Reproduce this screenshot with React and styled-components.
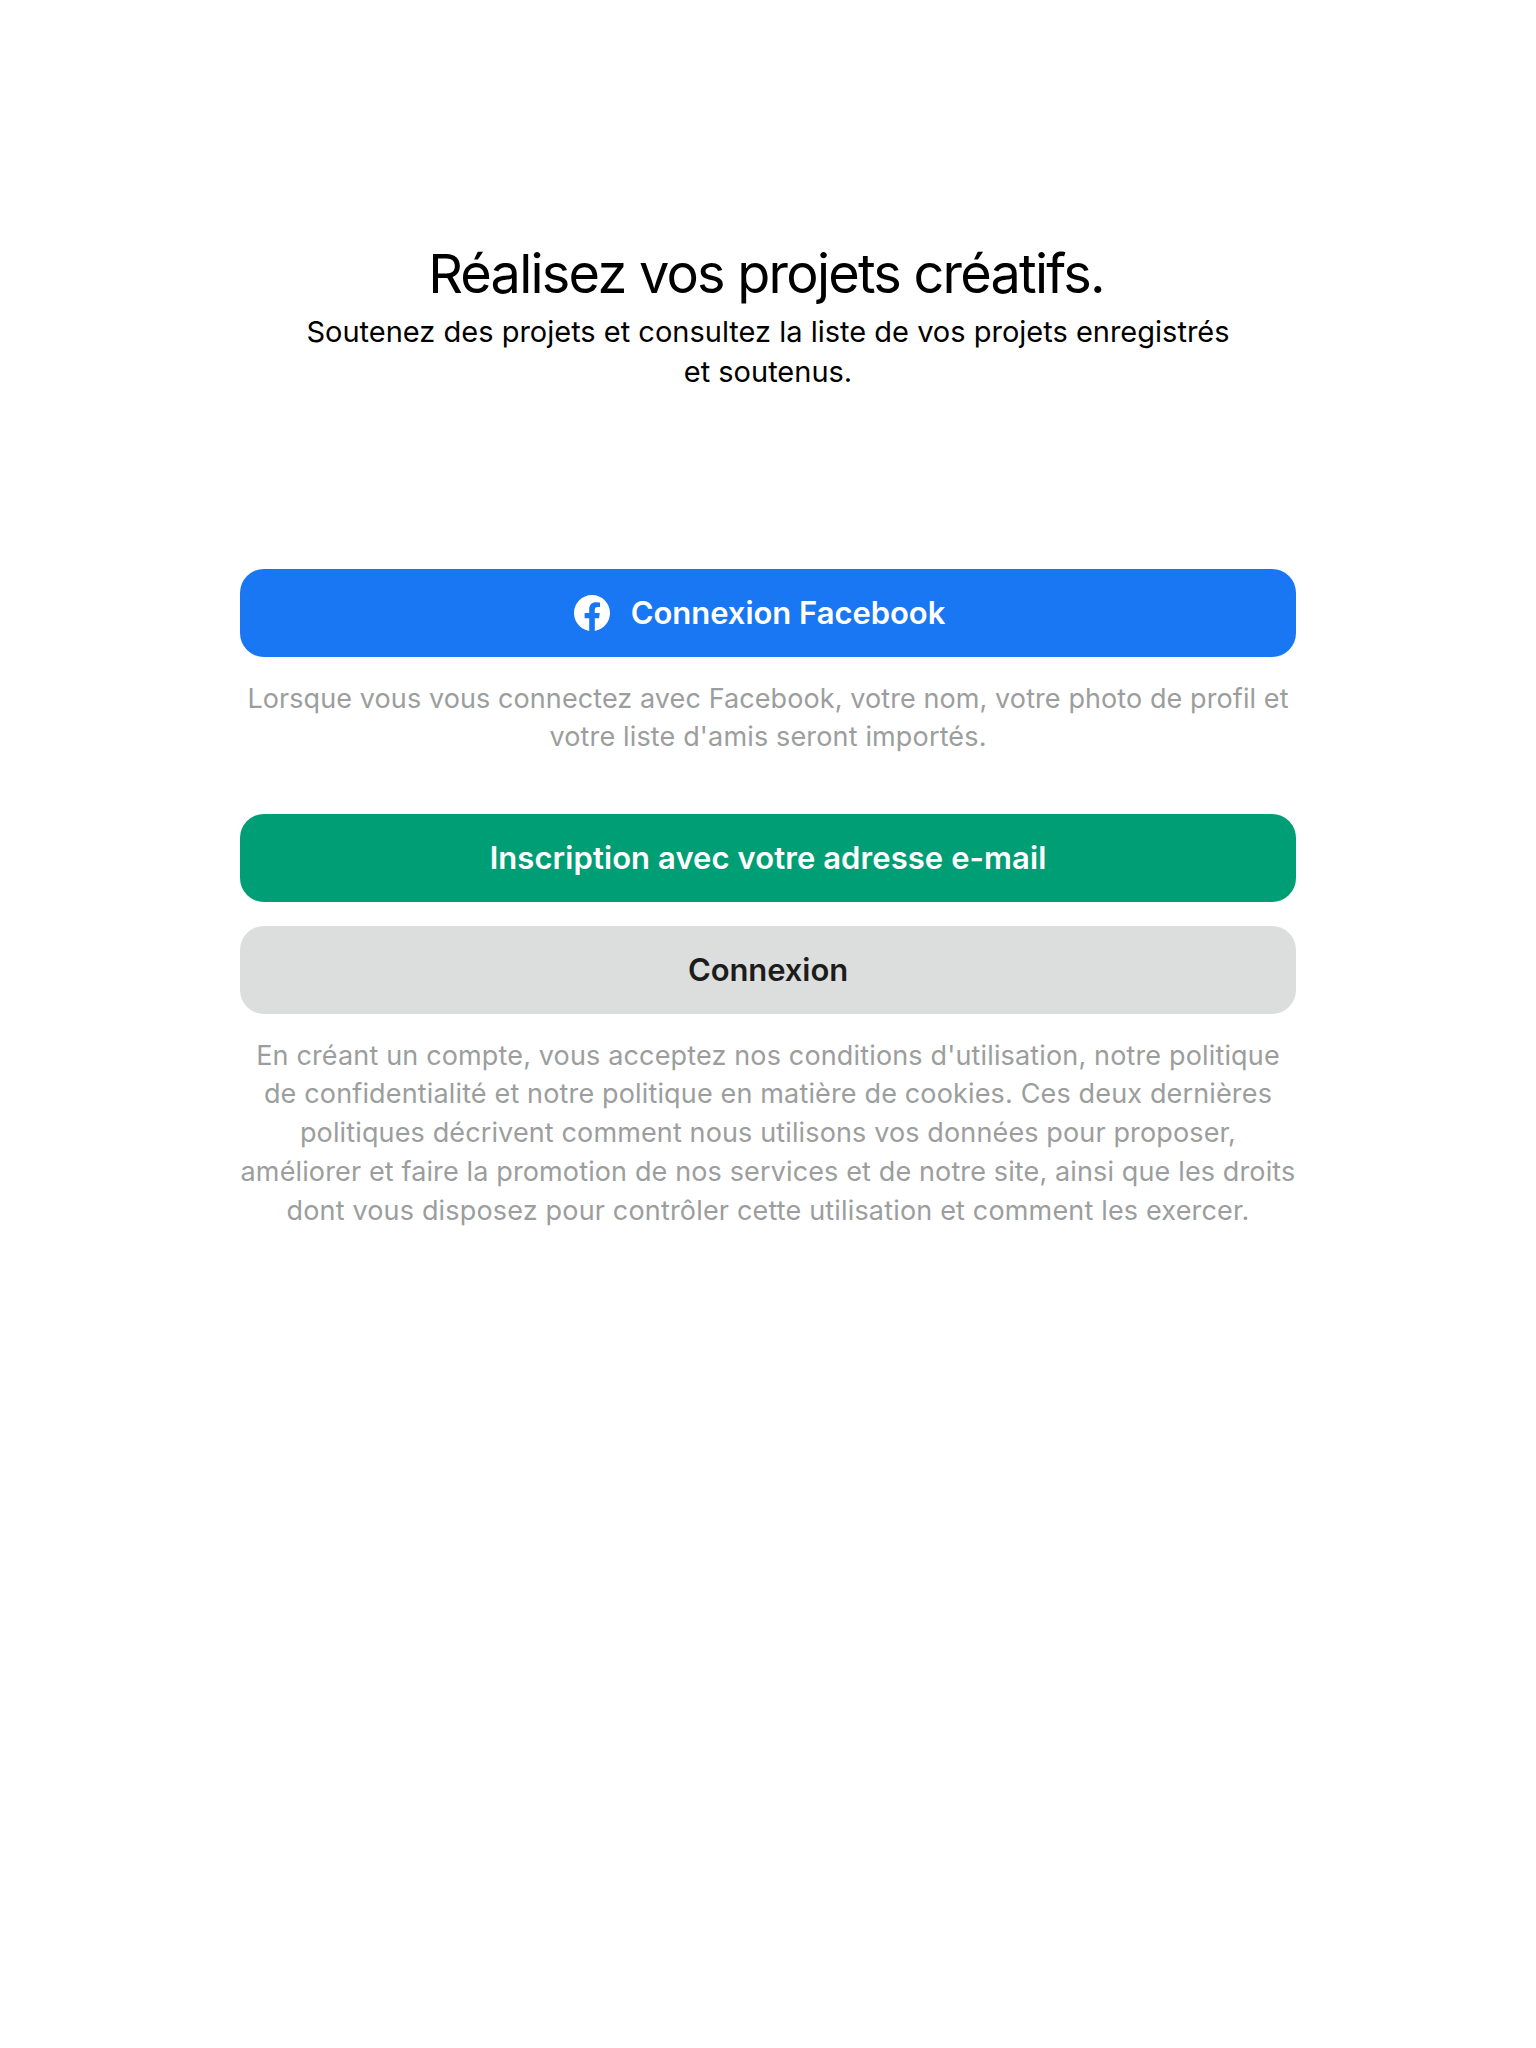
import React from "react";
import styled, { createGlobalStyle } from "styled-components";

const GlobalStyle = createGlobalStyle`
  body { margin: 0; background: #fff; font-family: Inter, "Liberation Sans", sans-serif; }
`;

const Page = styled.main`
  box-sizing: border-box;
  width: 1536px;
  min-height: 2048px;
  padding: 240.5px 240px 0;
  display: flex;
  flex-direction: column;
  background: #fff;
`;

const Header = styled.header`
  height: 328.5px;
  text-align: center;
  color: #000;
`;

const Title = styled.h1`
  margin: 0;
  padding-right: 4px;
  font-size: 54px;
  line-height: 66px;
  font-weight: 400;
`;

const Line = styled.span`
  display: block;
  white-space: nowrap;
  letter-spacing: ${(p) => p.$track || 0}px;
`;

const Subtitle = styled.p`
  margin: 5px 0 0;
  font-size: 29px;
  line-height: 40px;
`;

const Button = styled.button`
  box-sizing: border-box;
  flex: none;
  height: 88px;
  border: 0;
  border-radius: 24px;
  padding: 0 ${(p) => p.$inset || 0}px 1px 0;
  display: flex;
  align-items: center;
  justify-content: center;
  gap: 21px;
  font: 600 31px/40px Inter, sans-serif;
  background: ${(p) => p.$bg};
  color: ${(p) => p.$color || "#fff"};
`;

const Stack = styled.div`
  display: flex;
  flex-direction: column;
  gap: 24px;
`;

const Note = styled.p`
  flex: none;
  margin: 0;
  padding-top: 22.7px;
  box-sizing: border-box;
  min-height: ${(p) => p.$height || 0}px;
  font-size: 27px;
  line-height: ${(p) => p.$leading || 38.8}px;
  text-align: center;
  color: #9b9e9d;
`;

const Mark = styled.svg`
  display: block;
  width: 36px;
  height: 36px;
  fill: #fff;
`;

const FacebookMark = () => (
  <Mark viewBox="0 0 24 24">
    <path d="M24 12.073c0-6.627-5.373-12-12-12s-12 5.373-12 12c0 5.99 4.388 10.954 10.125 11.854v-8.385H7.078v-3.47h3.047V9.43c0-3.007 1.792-4.669 4.533-4.669 1.312 0 2.686.235 2.686.235v2.953H15.83c-1.491 0-1.956.925-1.956 1.874v2.25h3.328l-.532 3.47h-2.796v8.385C19.612 23.027 24 18.062 24 12.073z" />
  </Mark>
);

export default function App() {
  return (
    <>
      <GlobalStyle />
      <Page>
        <Header>
          <Title><Line $track={-1.76}>Réalisez vos projets créatifs.</Line></Title>
          <Subtitle>
            <Line>Soutenez des projets et consultez la liste de vos projets enregistrés</Line>
            <Line>et soutenus.</Line>
          </Subtitle>
        </Header>
        <Button $bg="#1977f3" $inset={17}>
          <FacebookMark />
          <Line $track={-0.04}>Connexion Facebook</Line>
        </Button>
        <Note $height={157} $leading={38}>
          <Line $track={0.09}>Lorsque vous vous connectez avec Facebook, votre nom, votre photo de profil et</Line>
          <Line $track={0.15}>votre liste d'amis seront importés.</Line>
        </Note>
        <Stack>
          <Button $bg="#009e74"><Line $track={0.08}>Inscription avec votre adresse e-mail</Line></Button>
          <Button $bg="#dcdedd" $color="#1c1c1c"><Line $track={-0.08}>Connexion</Line></Button>
        </Stack>
        <Note>
          <Line $track={0.15}>En créant un compte, vous acceptez nos conditions d'utilisation, notre politique</Line>
          <Line $track={0.15}>de confidentialité et notre politique en matière de cookies. Ces deux dernières</Line>
          <Line $track={0.13}>politiques décrivent comment nous utilisons vos données pour proposer,</Line>
          <Line $track={0.13}>améliorer et faire la promotion de nos services et de notre site, ainsi que les droits</Line>
          <Line $track={0.17}>dont vous disposez pour contrôler cette utilisation et comment les exercer.</Line>
        </Note>
      </Page>
    </>
  );
}
